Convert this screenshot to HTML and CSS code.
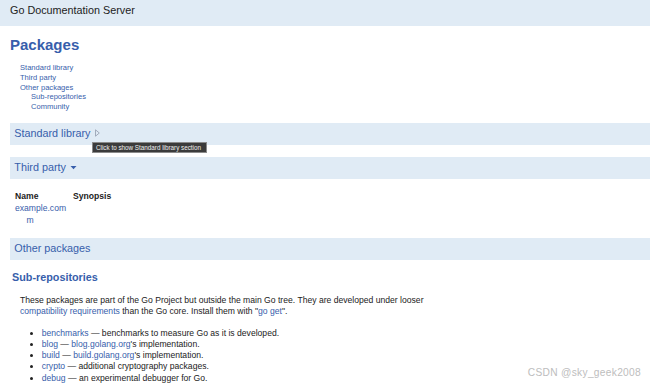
FILE: index.html
```html
<!DOCTYPE html>
<html lang="en">
<head>
    <meta charset="UTF-8">
    <title>Packages - Go Documentation Server</title>
    <link rel="stylesheet" href="styles.css">
</head>
<body>
    <div class="topbar">
        <div class="top-heading">Go Documentation Server</div>
    </div>

    <div class="page">
        <h1>Packages</h1>

        <dl class="manual-nav">
            <dd><a href="#stdlib">Standard library</a></dd>
            <dd><a href="#thirdparty">Third party</a></dd>
            <dd><a href="#other">Other packages</a></dd>
            <dd class="indent"><a href="#subrepo">Sub-repositories</a></dd>
            <dd class="indent"><a href="#community">Community</a></dd>
        </dl>

        <h2 class="toggle-title first" id="stdlib">
            Standard library
            <svg class="arrow-right" width="5" height="8" viewBox="0 0 5 8">
                <path d="M0.5 0.8 L4.3 4 L0.5 7.2 Z" fill="none" stroke="#9aa4b4" stroke-width="0.9"/>
            </svg>
        </h2>

        <h2 class="toggle-title" id="thirdparty">
            Third party
            <svg class="arrow-down" width="7" height="5" viewBox="0 0 7 5">
                <path d="M0.5 1 L6.5 1 L3.5 4.2 Z" fill="#375eab"/>
            </svg>
        </h2>

        <table class="dir">
            <tr>
                <th class="pkg-name">Name</th>
                <th>Synopsis</th>
            </tr>
            <tr>
                <td class="pkg-name"><a href="#">example.com</a></td>
                <td></td>
            </tr>
            <tr>
                <td class="pkg-name"><a class="depth1" href="#">m</a></td>
                <td></td>
            </tr>
        </table>

        <h2 class="toggle-title" id="other">Other packages</h2>

        <h3 id="subrepo">Sub-repositories</h3>
        <p class="intro">
            These packages are part of the Go Project but outside the main Go tree. They are developed under looser
            <a href="#">compatibility requirements</a> than the Go core. Install them with "<a href="#">go get</a>".
        </p>
        <ul class="subrepos">
            <li><a href="#">benchmarks</a> — benchmarks to measure Go as it is developed.</li>
            <li><a href="#">blog</a> — <a href="#">blog.golang.org</a>'s implementation.</li>
            <li><a href="#">build</a> — <a href="#">build.golang.org</a>'s implementation.</li>
            <li><a href="#">crypto</a> — additional cryptography packages.</li>
            <li><a href="#">debug</a> — an experimental debugger for Go.</li>
        </ul>
    </div>

    <!-- hover tooltip over the Standard library toggle -->
    <div class="tooltip">Click to show Standard library section</div>

    <div class="watermark">CSDN @sky_geek2008</div>
</body>
</html>
```

FILE: styles.css
```css
:root {
    --bar-color: #e0ebf5;
    --link-color: #375eab;
    --text-color: #222;
}

* {
    box-sizing: border-box;
}

html, body {
    overflow: hidden;
}

body {
    margin: 0;
    font-family: "Liberation Sans", Arial, sans-serif;
    color: var(--text-color);
    background: #fff;
    font-size: 8.6px;
    line-height: 1.3;
    position: relative;
    min-height: 384px;
}

a {
    color: var(--link-color);
    text-decoration: none;
}

.topbar {
    height: 26px;
    background: var(--bar-color);
    padding: 4px 0 0 10px;
}

.top-heading {
    font-size: 10.8px;
    line-height: 13px;
    color: #222;
}

.page {
    padding-left: 10px;
}

h1 {
    margin: 11.3px 0 10.8px;
    font-size: 15px;
    line-height: 15px;
    font-weight: bold;
    color: var(--link-color);
}

.manual-nav {
    margin: 0;
    padding-left: 10px;
    font-size: 7.55px;
    line-height: 9.8px;
}

.manual-nav dd {
    margin: 0;
}

.manual-nav dd.indent {
    padding-left: 11px;
}

.toggle-title {
    margin: 12px 0 0;
    padding: 4.3px 4.3px;
    background: var(--bar-color);
    font-size: 10.8px;
    line-height: 13.5px;
    font-weight: normal;
    color: var(--link-color);
}

.toggle-title.first {
    margin-top: 10.8px;
}

.arrow-right {
    margin-left: 1px;
    vertical-align: 0;
}

.arrow-down {
    margin-left: 1px;
    vertical-align: 1px;
}

table.dir {
    margin: 10.5px 0 0;
    border-collapse: collapse;
    border-spacing: 0;
}

table.dir th,
table.dir td {
    padding: 0;
    text-align: left;
    line-height: 12px;
    font-size: 8.6px;
}

table.dir .pkg-name {
    width: 63px;
    padding-left: 5px;
}

.depth1 {
    padding-left: 11.5px;
}

#other {
    margin-top: 12px;
}

h3 {
    margin: 11px 0 0;
    padding-left: 2px;
    font-size: 10.8px;
    line-height: 13.5px;
    font-weight: bold;
    color: var(--link-color);
}

.intro {
    margin: 10.7px 0 0 10px;
    max-width: 440px;
    line-height: 11.2px;
}

.subrepos {
    margin: 10.5px 0 0 10px;
    padding-left: 21.7px;
    line-height: 11.2px;
}

.tooltip {
    position: absolute;
    left: 92px;
    top: 142px;
    width: 115px;
    height: 11px;
    background: #3b3b3b;
    border: 1px solid #8a8a8a;
    color: #f0f0f0;
    font-size: 6.3px;
    line-height: 9px;
    padding-left: 3px;
    white-space: nowrap;
}

.watermark {
    position: absolute;
    right: 9px;
    top: 366px;
    font-size: 10.2px;
    line-height: 13px;
    letter-spacing: 0.3px;
    color: #bdbdbd;
}
```
